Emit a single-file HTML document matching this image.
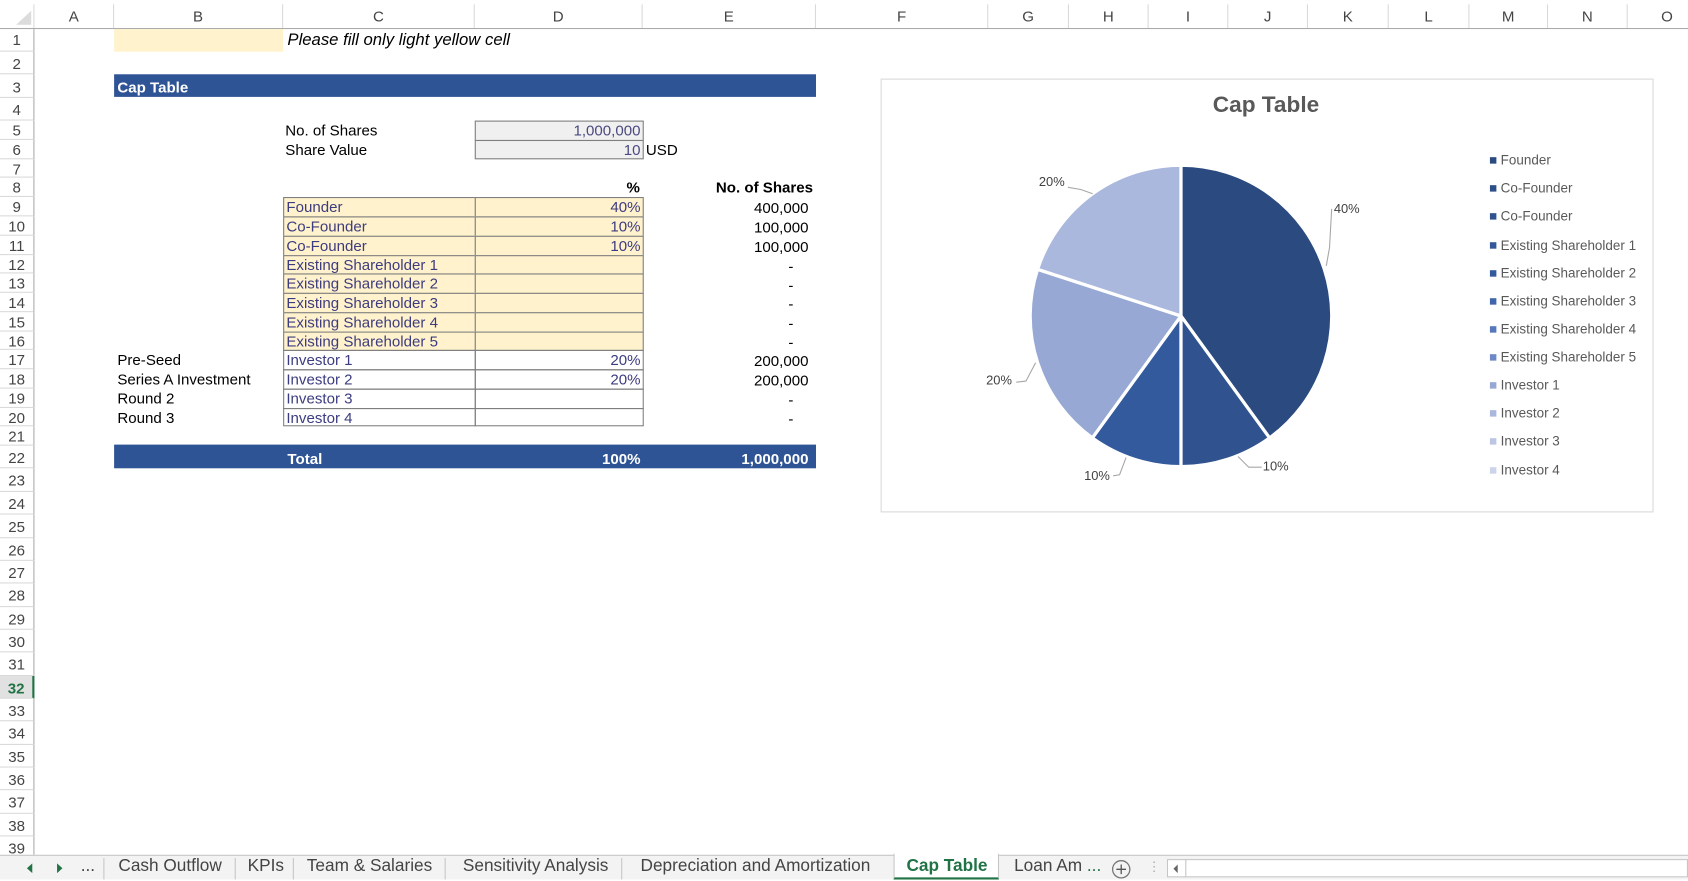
<!DOCTYPE html>
<html><head><meta charset="utf-8"><style>
*{margin:0;padding:0;box-sizing:border-box}
html,body{width:1688px;height:879px;overflow:hidden;background:#fff}
#w{position:absolute;left:0;top:0;width:1568px;height:817px;transform:scale(1.07653);transform-origin:0 0;font-family:"Liberation Sans",Arial,sans-serif;color:#000}
.a{position:absolute;white-space:nowrap}
.ch{position:absolute;top:4px;height:22px;line-height:22px;text-align:center;font-size:14px;color:#444;border-right:1px solid #dadada}
.rh{position:absolute;left:0;width:32px;text-align:center;font-size:14px;color:#444;border-bottom:1px solid #dadada;border-right:1px solid #ababab}
.t{position:absolute;font-size:14px;line-height:18px;white-space:nowrap}
.cell{position:absolute;border:1px solid #7f7f7f;font-size:14px;line-height:17px;padding:0 2px;white-space:nowrap}
.y{background:#fff2cc}
.blu{color:#3c3c80}
.r{text-align:right}
.lg{position:absolute;left:1384px;font-size:12.5px;color:#595959;line-height:14px;white-space:nowrap}
.lg i{display:inline-block;width:6px;height:6px;margin-right:4px;vertical-align:1px}
.tab{position:absolute;top:795px;height:22px;line-height:20px;font-size:16px;color:#444;white-space:nowrap}
.sep{position:absolute;top:797px;width:1px;height:20px;background:#c6c6c6}
</style></head><body><div id="w">
<div class="a" style="left:0;top:4px;width:32px;height:22px;border-right:1px solid #dadada"></div>
<svg class="a" style="left:14px;top:10px" width="16" height="14"><polygon points="15,0 15,13 1,13" fill="#dcdcdc"/></svg>
<div class="a" style="left:0;top:26px;width:1568px;height:1px;background:#ababab"></div>
<div class="ch" style="left:32px;width:74px">A</div>
<div class="ch" style="left:106px;width:157px">B</div>
<div class="ch" style="left:263px;width:178px">C</div>
<div class="ch" style="left:441px;width:156px">D</div>
<div class="ch" style="left:597px;width:161px">E</div>
<div class="ch" style="left:758px;width:160px">F</div>
<div class="ch" style="left:918px;width:75px">G</div>
<div class="ch" style="left:993px;width:74px">H</div>
<div class="ch" style="left:1067px;width:74px">I</div>
<div class="ch" style="left:1141px;width:74px">J</div>
<div class="ch" style="left:1215px;width:75px">K</div>
<div class="ch" style="left:1290px;width:75px">L</div>
<div class="ch" style="left:1365px;width:73px">M</div>
<div class="ch" style="left:1438px;width:74px">N</div>
<div class="ch" style="left:1512px;width:74px">O</div>
<div class="rh" style="top:27px;height:21px;line-height:21px">1</div>
<div class="rh" style="top:48px;height:21px;line-height:23px">2</div>
<div class="rh" style="top:69px;height:22px;line-height:24px">3</div>
<div class="rh" style="top:91px;height:21px;line-height:23px">4</div>
<div class="rh" style="top:112px;height:18px;line-height:19px">5</div>
<div class="rh" style="top:130px;height:18px;line-height:19px">6</div>
<div class="rh" style="top:148px;height:17px;line-height:18px">7</div>
<div class="rh" style="top:165px;height:18px;line-height:19px">8</div>
<div class="rh" style="top:183px;height:18px;line-height:19px">9</div>
<div class="rh" style="top:201px;height:18px;line-height:19px">10</div>
<div class="rh" style="top:219px;height:18px;line-height:19px">11</div>
<div class="rh" style="top:237px;height:17px;line-height:18px">12</div>
<div class="rh" style="top:254px;height:18px;line-height:19px">13</div>
<div class="rh" style="top:272px;height:18px;line-height:19px">14</div>
<div class="rh" style="top:290px;height:18px;line-height:19px">15</div>
<div class="rh" style="top:308px;height:17px;line-height:18px">16</div>
<div class="rh" style="top:325px;height:18px;line-height:19px">17</div>
<div class="rh" style="top:343px;height:18px;line-height:19px">18</div>
<div class="rh" style="top:361px;height:18px;line-height:19px">19</div>
<div class="rh" style="top:379px;height:17px;line-height:18px">20</div>
<div class="rh" style="top:396px;height:18px;line-height:19px">21</div>
<div class="rh" style="top:414px;height:21px;line-height:23px">22</div>
<div class="rh" style="top:435px;height:22px;line-height:23px">23</div>
<div class="rh" style="top:457px;height:21px;line-height:23px">24</div>
<div class="rh" style="top:478px;height:22px;line-height:23px">25</div>
<div class="rh" style="top:500px;height:21px;line-height:23px">26</div>
<div class="rh" style="top:521px;height:21px;line-height:23px">27</div>
<div class="rh" style="top:542px;height:22px;line-height:23px">28</div>
<div class="rh" style="top:564px;height:21px;line-height:23px">29</div>
<div class="rh" style="top:585px;height:21px;line-height:23px">30</div>
<div class="rh" style="top:606px;height:22px;line-height:23px">31</div>
<div class="rh" style="top:628px;height:21px;line-height:23px;background:#e1e1e1;color:#217346;font-weight:bold;border-right:2px solid #217346">32</div>
<div class="rh" style="top:649px;height:21px;line-height:23px">33</div>
<div class="rh" style="top:670px;height:22px;line-height:23px">34</div>
<div class="rh" style="top:692px;height:21px;line-height:23px">35</div>
<div class="rh" style="top:713px;height:21px;line-height:23px">36</div>
<div class="rh" style="top:734px;height:22px;line-height:23px">37</div>
<div class="rh" style="top:756px;height:21px;line-height:23px">38</div>
<div class="rh" style="top:777px;height:18px;line-height:22px;border-bottom:none">39</div>

<div class="a" style="left:106px;top:27px;width:157px;height:21px;background:#fff2cc"></div>
<div class="t" style="left:267px;top:29px;font-size:15.5px;font-style:italic">Please fill only light yellow cell</div>
<div class="a" style="left:106px;top:69px;width:652px;height:21px;background:#2f5496"></div>
<div class="t" style="left:109px;top:72px;color:#fff;font-weight:bold">Cap Table</div>
<div class="t" style="left:265px;top:112px">No. of Shares</div>
<div class="t" style="left:265px;top:130px">Share Value</div>
<div class="cell r" style="left:441px;top:112px;width:157px;height:19px;background:#f0f0f0;color:#4a4a80">1,000,000</div>
<div class="cell r" style="left:441px;top:130px;width:157px;height:18px;background:#f0f0f0;color:#4a4a80">10</div>
<div class="t" style="left:600px;top:130px">USD</div>
<div class="t" style="left:582px;top:165px;font-weight:bold">%</div>
<div class="t" style="left:665px;top:165px;font-weight:bold">No. of Shares</div>

<div class="cell y blu" style="left:263px;top:183px;width:179px;height:19px">Founder</div>
<div class="cell y blu r" style="left:441px;top:183px;width:157px;height:19px">40%</div>
<div class="cell y blu" style="left:263px;top:201px;width:179px;height:19px">Co-Founder</div>
<div class="cell y blu r" style="left:441px;top:201px;width:157px;height:19px">10%</div>
<div class="cell y blu" style="left:263px;top:219px;width:179px;height:19px">Co-Founder</div>
<div class="cell y blu r" style="left:441px;top:219px;width:157px;height:19px">10%</div>
<div class="cell y blu" style="left:263px;top:237px;width:179px;height:18px">Existing Shareholder 1</div>
<div class="cell y" style="left:441px;top:237px;width:157px;height:18px"></div>
<div class="cell y blu" style="left:263px;top:254px;width:179px;height:19px">Existing Shareholder 2</div>
<div class="cell y" style="left:441px;top:254px;width:157px;height:19px"></div>
<div class="cell y blu" style="left:263px;top:272px;width:179px;height:19px">Existing Shareholder 3</div>
<div class="cell y" style="left:441px;top:272px;width:157px;height:19px"></div>
<div class="cell y blu" style="left:263px;top:290px;width:179px;height:19px">Existing Shareholder 4</div>
<div class="cell y" style="left:441px;top:290px;width:157px;height:19px"></div>
<div class="cell y blu" style="left:263px;top:308px;width:179px;height:18px">Existing Shareholder 5</div>
<div class="cell y" style="left:441px;top:308px;width:157px;height:18px"></div>
<div class="cell blu" style="left:263px;top:325px;width:179px;height:19px">Investor 1</div>
<div class="cell blu r" style="left:441px;top:325px;width:157px;height:19px">20%</div>
<div class="cell blu" style="left:263px;top:343px;width:179px;height:19px">Investor 2</div>
<div class="cell blu r" style="left:441px;top:343px;width:157px;height:19px">20%</div>
<div class="cell blu" style="left:263px;top:361px;width:179px;height:19px">Investor 3</div>
<div class="cell" style="left:441px;top:361px;width:157px;height:19px"></div>
<div class="cell blu" style="left:263px;top:379px;width:179px;height:17px">Investor 4</div>
<div class="cell" style="left:441px;top:379px;width:157px;height:17px"></div>

<div class="t" style="left:109px;top:325px">Pre-Seed</div>
<div class="t" style="left:109px;top:343px">Series A Investment</div>
<div class="t" style="left:109px;top:361px">Round 2</div>
<div class="t" style="left:109px;top:379px">Round 3</div>

<div class="t r" style="left:600px;width:151px;top:184px">400,000</div>
<div class="t r" style="left:600px;width:151px;top:202px">100,000</div>
<div class="t r" style="left:600px;width:151px;top:220px">100,000</div>
<div class="t r" style="left:600px;width:137px;top:238px">-</div>
<div class="t r" style="left:600px;width:137px;top:256px">-</div>
<div class="t r" style="left:600px;width:137px;top:273px">-</div>
<div class="t r" style="left:600px;width:137px;top:291px">-</div>
<div class="t r" style="left:600px;width:137px;top:309px">-</div>
<div class="t r" style="left:600px;width:151px;top:326px">200,000</div>
<div class="t r" style="left:600px;width:151px;top:344px">200,000</div>
<div class="t r" style="left:600px;width:137px;top:362px">-</div>
<div class="t r" style="left:600px;width:137px;top:380px">-</div>

<div class="a" style="left:106px;top:413px;width:652px;height:22px;background:#2f5496"></div>
<div class="t" style="left:267px;top:417px;color:#fff;font-weight:bold">Total</div>
<div class="t r" style="left:441px;width:154px;top:417px;color:#fff;font-weight:bold">100%</div>
<div class="t r" style="left:600px;width:151px;top:417px;color:#fff;font-weight:bold">1,000,000</div>

<div class="a" style="left:818px;top:73px;width:718px;height:403px;border:1px solid #d9d9d9;background:#fff"></div>
<div class="t" style="left:1076px;width:200px;text-align:center;top:86px;font-size:21px;line-height:24px;font-weight:bold;color:#595959">Cap Table</div>
<svg class="a" style="left:0;top:0" width="1568" height="817">
<g stroke="#fff" stroke-width="3" stroke-linejoin="round">
<path d="M1097,293.5 L1097,153.5 A140,140 0 0 1 1179.3,406.8 Z" fill="#2a4a80"/>
<path d="M1097,293.5 L1179.3,406.8 A140,140 0 0 1 1097,433.5 Z" fill="#30538f"/>
<path d="M1097,293.5 L1097,433.5 A140,140 0 0 1 1014.7,406.8 Z" fill="#345a9e"/>
<path d="M1097,293.5 L1014.7,406.8 A140,140 0 0 1 963.8,250.2 Z" fill="#97a8d4"/>
<path d="M1097,293.5 L963.8,250.2 A140,140 0 0 1 1097,153.5 Z" fill="#abb8dd"/>
</g>
<g stroke="#a6a6a6" stroke-width="1" fill="none">
<polyline points="1237,194 1235,230 1232,247"/>
<polyline points="1150,424 1160,434 1172,434"/>
<polyline points="1046,425 1040,441 1034,442"/>
<polyline points="962,337 953,354 944,355"/>
<polyline points="992,174 1004,176 1015,180"/>
</g>
<g font-family="Liberation Sans, Arial, sans-serif" font-size="12" fill="#404040">
<text x="1239" y="198">40%</text>
<text x="1173" y="437">10%</text>
<text x="1007" y="446">10%</text>
<text x="916" y="357">20%</text>
<text x="965" y="173">20%</text>
</g>
</svg>
<div class="lg" style="top:142px"><i style="background:#2a4a80"></i>Founder</div>
<div class="lg" style="top:168px"><i style="background:#2e5089"></i>Co-Founder</div>
<div class="lg" style="top:194px"><i style="background:#30538f"></i>Co-Founder</div>
<div class="lg" style="top:221px"><i style="background:#335799"></i>Existing Shareholder 1</div>
<div class="lg" style="top:247px"><i style="background:#345a9e"></i>Existing Shareholder 2</div>
<div class="lg" style="top:273px"><i style="background:#4065aa"></i>Existing Shareholder 3</div>
<div class="lg" style="top:299px"><i style="background:#5677bb"></i>Existing Shareholder 4</div>
<div class="lg" style="top:325px"><i style="background:#7088c6"></i>Existing Shareholder 5</div>
<div class="lg" style="top:351px"><i style="background:#97a8d4"></i>Investor 1</div>
<div class="lg" style="top:377px"><i style="background:#abb8dd"></i>Investor 2</div>
<div class="lg" style="top:403px"><i style="background:#bcc6e4"></i>Investor 3</div>
<div class="lg" style="top:430px"><i style="background:#ccd4ea"></i>Investor 4</div>

<div class="a" style="left:0;top:794px;width:1568px;height:23px;background:#f3f3f3;border-top:1px solid #c6c6c6"></div>
<svg class="a" style="left:24px;top:801px" width="40" height="12"><polygon points="6,1 6,10 1,5.5" fill="#217346"/><polygon points="29,1 29,10 34,5.5" fill="#217346"/></svg>
<div class="tab" style="left:75px">...</div>
<div class="sep" style="left:96px"></div>
<div class="tab" style="left:110px">Cash Outflow</div>
<div class="sep" style="left:218px"></div>
<div class="tab" style="left:230px">KPIs</div>
<div class="sep" style="left:272px"></div>
<div class="tab" style="left:285px">Team &amp; Salaries</div>
<div class="sep" style="left:413px"></div>
<div class="tab" style="left:430px">Sensitivity Analysis</div>
<div class="sep" style="left:577px"></div>
<div class="tab" style="left:595px">Depreciation and Amortization</div>
<div class="a" style="left:830px;top:793px;width:98px;height:24px;background:#fff;border-left:1px solid #c6c6c6;border-right:1px solid #c6c6c6;border-bottom:2px solid #217346"></div>
<div class="tab" style="left:842px;color:#217346;font-weight:bold">Cap Table</div>
<div class="tab" style="left:942px">Loan Am <span style="color:#217346">...</span></div>
<svg class="a" style="left:1032px;top:798px" width="20" height="20"><circle cx="9.5" cy="9.5" r="8" fill="none" stroke="#777" stroke-width="1.2"/><path d="M9.5,5v9M5,9.5h9" stroke="#555" stroke-width="1.2"/></svg>
<div class="tab" style="left:1066px;color:#aaa;font-size:12px">⋮</div>
<div class="a" style="left:1084px;top:798px;width:484px;height:17px;background:#fff;border:1px solid #c6c6c6"></div>
<div class="a" style="left:1101px;top:798px;width:1px;height:17px;background:#c6c6c6"></div>
<svg class="a" style="left:1089px;top:802px" width="8" height="10"><polygon points="5,1 5,9 1,5" fill="#666"/></svg>
</div></body></html>
